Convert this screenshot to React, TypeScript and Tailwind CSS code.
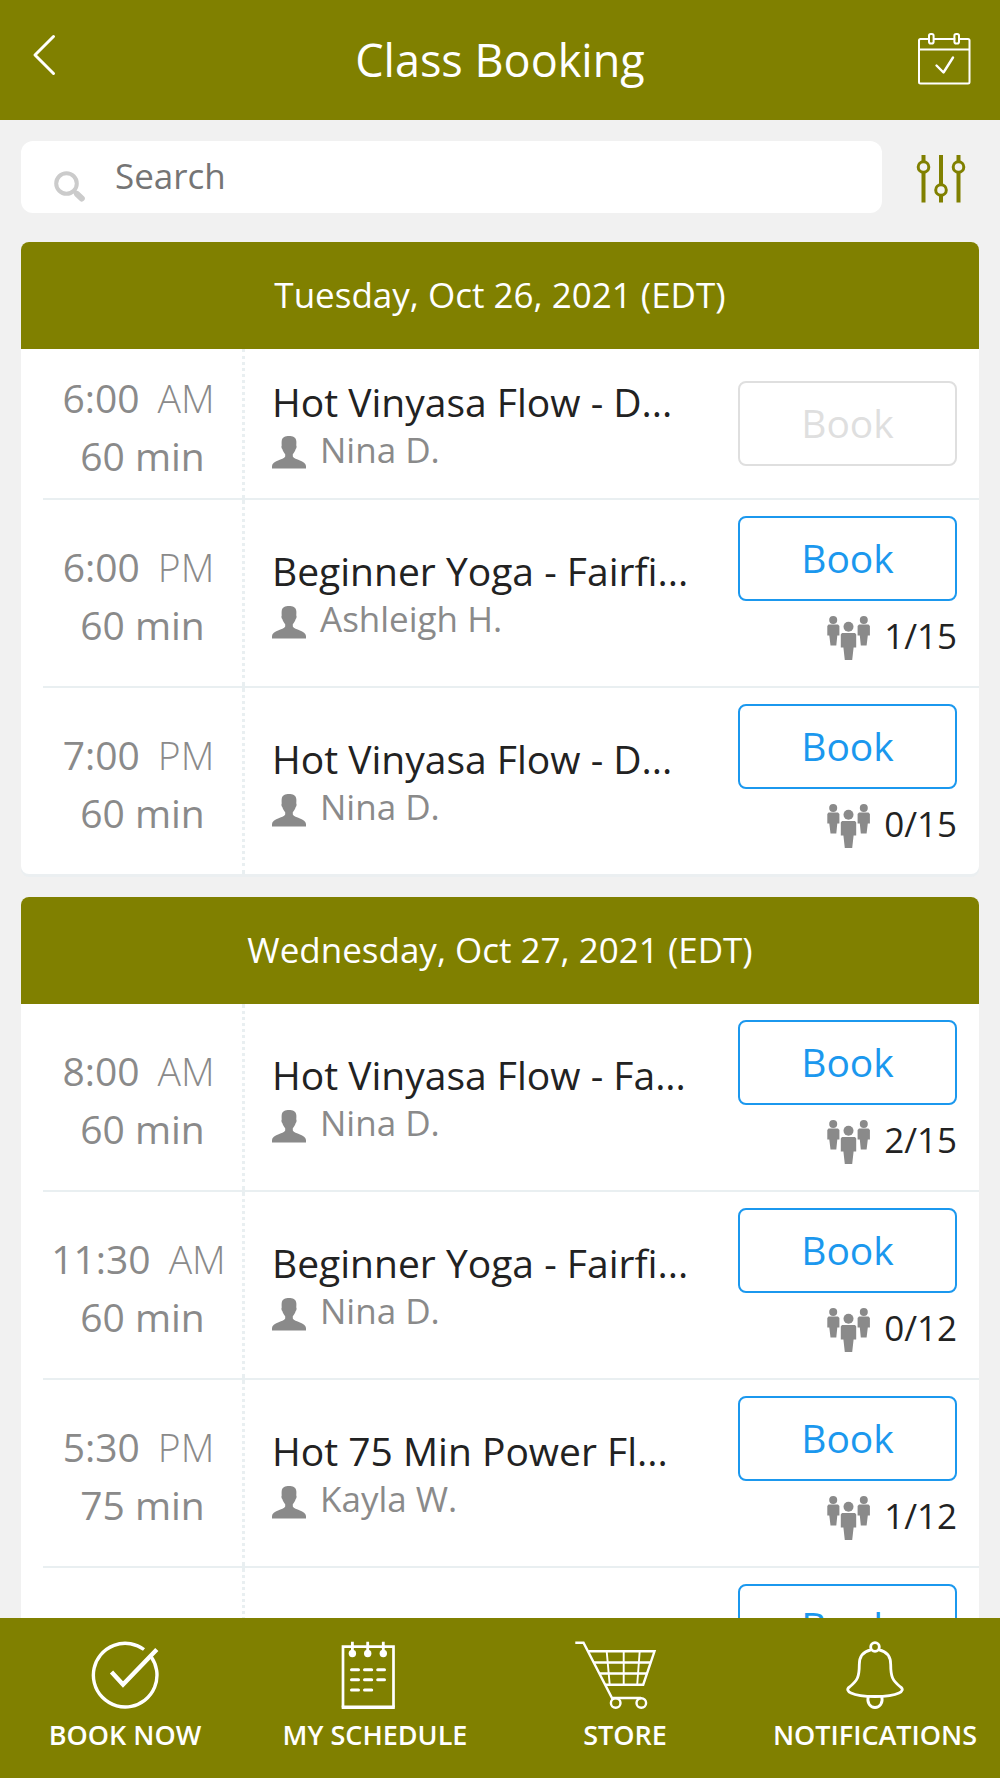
import React from "react";

type Session = {
  time: string;
  period: string;
  duration: string;
  title: string;
  teacher: string;
  spots?: string;
};

type Day = { date: string; sessions: Session[] };

const days: Day[] = [
  {
    date: "Tuesday, Oct 26, 2021 (EDT)",
    sessions: [
      { time: "6:00", period: "AM", duration: "60 min", title: "Hot Vinyasa Flow - D...", teacher: "Nina D." },
      { time: "6:00", period: "PM", duration: "60 min", title: "Beginner Yoga - Fairfi...", teacher: "Ashleigh H.", spots: "1/15" },
      { time: "7:00", period: "PM", duration: "60 min", title: "Hot Vinyasa Flow - D...", teacher: "Nina D.", spots: "0/15" },
    ],
  },
  {
    date: "Wednesday, Oct 27, 2021 (EDT)",
    sessions: [
      { time: "8:00", period: "AM", duration: "60 min", title: "Hot Vinyasa Flow - Fa...", teacher: "Nina D.", spots: "2/15" },
      { time: "11:30", period: "AM", duration: "60 min", title: "Beginner Yoga - Fairfi...", teacher: "Nina D.", spots: "0/12" },
      { time: "5:30", period: "PM", duration: "75 min", title: "Hot 75 Min Power Fl...", teacher: "Kayla W.", spots: "1/12" },
      { time: "", period: "", duration: "", title: "", teacher: "", spots: "" },
    ],
  },
];

function BackIcon() {
  return (
    <svg width="24" height="42" viewBox="0 0 24 42" fill="none" stroke="currentColor" strokeWidth="3" strokeLinecap="round" strokeLinejoin="round" aria-hidden="true">
      <path d="M21.500 2.500L3 21L21.500 39.500" />
    </svg>
  );
}

function CalendarIcon() {
  return (
    <svg width="54" height="54" viewBox="0 0 54 54" fill="none" stroke="currentColor" strokeWidth="2" strokeLinecap="round" strokeLinejoin="round" aria-hidden="true">
      <path d="M12 7H3.500Q2 7 2 8.500V50Q2 51.500 3.500 51.500H51Q52.500 51.500 52.500 50V8.500Q52.500 7 51 7H42.500M17 7H37.500M2 17.500H52.500" />
      <rect x="12" y="2" width="4.600" height="9.500" rx="1.800" />
      <rect x="37.400" y="2" width="4.600" height="9.500" rx="1.800" />
      <path d="M19.500 33.500L26.500 40.500L36 25.500" strokeWidth="2.400" />
    </svg>
  );
}

function FilterIcon() {
  return (
    <svg width="50" height="50" viewBox="0 0 50 50" fill="none" stroke="currentColor" strokeWidth="4" aria-hidden="true">
      <path d="M7.500 1V7M7.500 19V48.500M25 1V30M25 42V48.500M42.500 1V7M42.500 19V48.500" />
      <g strokeWidth="3">
        <circle cx="7.500" cy="13" r="5.300" />
        <circle cx="25" cy="36" r="5.300" />
        <circle cx="42.500" cy="13" r="5.300" />
      </g>
    </svg>
  );
}

function SearchIcon() {
  return (
    <svg width="32" height="32" viewBox="0 0 32 32" fill="none" stroke="#cbcbcb" aria-hidden="true">
      <circle cx="12.500" cy="12.500" r="10.300" strokeWidth="4" />
      <path d="M19.500 19.500L22.500 22.500" strokeWidth="4" />
      <path d="M23 23L27.800 27.500" strokeWidth="6" strokeLinecap="round" />
    </svg>
  );
}

function PersonIcon() {
  return (
    <svg className="mt-1.5 shrink-0" width="34" height="33" viewBox="0 0 34 33" fill="#8a8a8a" aria-hidden="true">
      <path d="M17 0C20.500 0 24 1.200 24.300 5C24.500 6.500 24.300 8.500 24.300 9.500C25 10.500 24.300 12.500 23.700 13C23 15.500 21.800 17 20.800 18.200V20.500C22.500 24 33.800 24.500 34 30V32.500H0V30C.2 24.500 11.500 24 13.200 20.500V18.200C12.200 17 11 15.500 10.300 13C9.700 12.500 9 10.500 9.700 9.500C9.700 8.500 9.500 6.500 9.700 5C10 1.200 13.500 0 17 0Z" />
    </svg>
  );
}

function GroupIcon() {
  return (
    <svg className="shrink-0" width="43" height="44" viewBox="0 0 43 44" fill="#8a8a8a" aria-hidden="true">
      <circle cx="6.200" cy="4" r="4" />
      <path d="M1.500 8.500H11L12.400 10V19.500H10.300L9.300 29.500H3.500L2.300 19.500H.3V10Z" />
      <circle cx="36.800" cy="4" r="4" />
      <path d="M32 8.500H41.500L42.900 10V19.500H40.800L39.600 29.500H33.800L32.800 19.500H30.600V10Z" />
      <circle cx="21.500" cy="10.800" r="5" />
      <path d="M15 17H28L29.200 18.500V31.500H26.600L25.200 44H17.800L16.400 31.500H13.800V18.500Z" />
    </svg>
  );
}

function BookNowIcon() {
  return (
    <svg width="100" height="68" viewBox="0 0 100 68" fill="none" stroke="currentColor" strokeWidth="3.400" aria-hidden="true">
      <path d="M69 8.500A31.800 31.800 0 1 0 76.300 16" />
      <path d="M36.500 31L48 43.500L81.800 8.500" strokeWidth="4.400" />
    </svg>
  );
}

function ScheduleIcon() {
  return (
    <svg width="100" height="68" viewBox="0 0 100 68" fill="none" stroke="currentColor" aria-hidden="true">
      <path d="M18 66.500V5.600H68.500V66.500" strokeWidth="2.700" />
      <path d="M16.700 66.200H69.800" strokeWidth="3.400" />
      <path d="M27.400 .8V12M42.700 .8V12M58.300 .8V12" strokeWidth="2.800" />
      <g fill="currentColor" stroke="none">
        <circle cx="27.400" cy="12.500" r="3.700" />
        <circle cx="42.700" cy="12.500" r="3.700" />
        <circle cx="58.300" cy="12.500" r="3.700" />
      </g>
      <path d="M26.500 28.700H33.500M39.500 28.700H46.700M52.700 28.700H59.500M26.500 38.700H33.500M39.500 38.700H46.700M52.700 38.700H59.500M26.500 49H33.500M39.500 49H46.700" strokeWidth="3" strokeLinecap="round" />
    </svg>
  );
}

function CartIcon() {
  return (
    <svg width="100" height="68" viewBox="0 0 100 68" fill="none" stroke="currentColor" strokeWidth="2.400" aria-hidden="true">
      <path d="M.3 1.800H8.500L37 57H66" />
      <path d="M13 10.300H79.500L68.200 43.700H30" />
      <path d="M18.700 21.500H75.500M24.300 32.500H72" />
      <path d="M31.700 10.300L34.700 43.700M48.700 10.300V43.700M64.700 10.300L62.200 43.700" strokeWidth="1.900" />
      <circle cx="40.700" cy="62" r="4.800" />
      <circle cx="66.300" cy="62" r="4.800" />
    </svg>
  );
}

function BellIcon() {
  return (
    <svg width="100" height="68" viewBox="0 0 100 68" fill="none" stroke="currentColor" strokeWidth="2.800" strokeLinejoin="round" aria-hidden="true">
      <circle cx="50" cy="6" r="4.300" />
      <path d="M46 8.800C37.500 10.500 34.300 16.500 34.300 23.500C34.300 36 32.500 39.500 24.500 46C21.500 48 22.500 50.500 26 52C31 54.500 40 55.500 50 55.500C60 55.500 69 54.500 74 52C77.500 50.500 78.500 48 75.500 46C67.500 39.500 65.700 36 65.700 23.500C65.700 16.500 62.500 10.500 54 8.800" />
      <path d="M43.300 55.500C41.500 62 45.500 66.500 50 66.500C54.500 66.500 58.500 62 56.700 55.500" />
    </svg>
  );
}

const tabs = [
  { label: "BOOK NOW", Icon: BookNowIcon },
  { label: "MY SCHEDULE", Icon: ScheduleIcon },
  { label: "STORE", Icon: CartIcon },
  { label: "NOTIFICATIONS", Icon: BellIcon },
];

function SessionRow({ session, last }: { session: Session; last: boolean }) {
  const open = session.spots !== undefined;
  return (
    <li className={`ml-[22px] flex min-h-[151px] ${last ? "" : "border-b-2 border-[#e9eff1]"}`}>
      <div className="flex w-[202px] shrink-0 flex-col justify-center border-r-[3px] border-dotted border-[#e9eff1] pt-1.5 text-center text-[39px] leading-[58px] text-[#8a8a8a]">
        <p className="mr-2 whitespace-nowrap">
          {session.time}
          <span className="ml-[18px] font-light">{session.period}</span>
        </p>
        <p>{session.duration}</p>
      </div>
      <div className="flex min-w-0 flex-1 flex-col justify-center pt-1 pl-[27px] leading-[48px]">
        <h3 className="text-[39px] whitespace-nowrap text-[#222222]">{session.title}</h3>
        {session.teacher && (
          <p className="flex items-center gap-3.5 text-[35px] whitespace-nowrap text-[#8a8a8a]">
            <PersonIcon />
            {session.teacher}
          </p>
        )}
      </div>
      <div className="mr-[22px] flex w-[219px] shrink-0 flex-col justify-center">
        <button
          type="button"
          disabled={!open}
          className={`h-[85px] rounded-lg border-2 text-[39px] ${open ? "mt-4 border-[#1b98ee] text-[#1b98ee]" : "border-[#dfdfdf] text-[#dfdfdf]"}`}
        >
          Book
        </button>
        {open && (
          <div className="mt-[15px] mb-[26px] flex h-11 justify-end gap-3.5 text-[35px] leading-10 text-[#222222]">
            <GroupIcon />
            <span>{session.spots}</span>
          </div>
        )}
      </div>
    </li>
  );
}

function DayCard({ day }: { day: Day }) {
  return (
    <section className="overflow-hidden rounded-lg bg-white shadow-[0_3px_0_#ebeff1]">
      <h2 className="flex h-[107px] items-center justify-center bg-[#808000] text-[35px] text-white">{day.date}</h2>
      <ul>
        {day.sessions.map((s, i) => (
          <SessionRow key={i} session={s} last={i === day.sessions.length - 1} />
        ))}
      </ul>
    </section>
  );
}

export default function App() {
  return (
    <div className="flex h-screen flex-col bg-[#f1f1f1] font-['Open_Sans',sans-serif]">
      <header className="grid h-[120px] shrink-0 grid-cols-[1fr_auto_1fr] items-center bg-[#808000] px-[29px] text-white">
        <button type="button" aria-label="Back" className="mb-2.5 ml-[3px] justify-self-start">
          <BackIcon />
        </button>
        <h1 className="text-[45px]">Class Booking</h1>
        <button type="button" aria-label="My bookings" className="mb-0.5 justify-self-end">
          <CalendarIcon />
        </button>
      </header>

      <main className="flex-1 overflow-y-auto px-[21px] [scrollbar-width:none]">
        <div className="flex items-center pt-[21px] pb-[29px]">
          <label className="flex h-[72px] flex-1 items-center rounded-xl bg-white pl-[33px]">
            <span className="mt-5">
              <SearchIcon />
            </span>
            <input
              type="text"
              aria-label="Search classes"
              placeholder="Search"
              className="ml-[29px] h-full min-w-0 flex-1 bg-transparent pb-1 text-[35px] outline-none placeholder:text-[#757575]"
            />
          </label>
          <button type="button" aria-label="Filter" className="mt-1 mr-[13px] ml-[34px] text-[#808000]">
            <FilterIcon />
          </button>
        </div>
        <div className="flex flex-col gap-[23px]">
          {days.map((d) => (
            <DayCard key={d.date} day={d} />
          ))}
        </div>
      </main>

      <nav className="grid h-[160px] shrink-0 grid-cols-4 bg-[#808000] text-white">
        {tabs.map(({ label, Icon }) => (
          <a key={label} href="#" className="flex flex-col items-center gap-2 pt-[23px] text-[27px] leading-9 font-semibold whitespace-nowrap">
            <Icon />
            {label}
          </a>
        ))}
      </nav>
    </div>
  );
}
